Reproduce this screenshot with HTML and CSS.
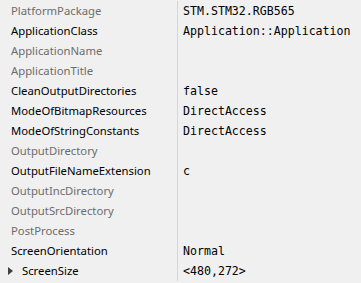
FILE: index.html
```html
<!DOCTYPE html>
<html lang="en">
<head>
    <meta charset="UTF-8">
    <title>Properties</title>
    <link rel="stylesheet" href="styles.css">
</head>
<body>

<div class="grid">
    <div class="row"><div class="name dim">PlatformPackage</div><div class="value">STM.STM32.RGB565</div></div>
    <div class="row"><div class="name">ApplicationClass</div><div class="value">Application::Application</div></div>
    <div class="row"><div class="name dim">ApplicationName</div><div class="value"></div></div>
    <div class="row"><div class="name dim">ApplicationTitle</div><div class="value"></div></div>
    <div class="row"><div class="name">CleanOutputDirectories</div><div class="value">false</div></div>
    <div class="row"><div class="name">ModeOfBitmapResources</div><div class="value">DirectAccess</div></div>
    <div class="row"><div class="name">ModeOfStringConstants</div><div class="value">DirectAccess</div></div>
    <div class="row"><div class="name dim">OutputDirectory</div><div class="value"></div></div>
    <div class="row"><div class="name">OutputFileNameExtension</div><div class="value">c</div></div>
    <div class="row"><div class="name dim">OutputIncDirectory</div><div class="value"></div></div>
    <div class="row"><div class="name dim">OutputSrcDirectory</div><div class="value"></div></div>
    <div class="row"><div class="name dim">PostProcess</div><div class="value"></div></div>
    <div class="row"><div class="name">ScreenOrientation</div><div class="value">Normal</div></div>
    <div class="row"><div class="name expandable"><span class="arrow"></span>ScreenSize</div><div class="value">&lt;480,272&gt;</div></div>
</div>

</body>
</html>
```

FILE: styles.css
```css
body {
    margin: 0;
    padding: 0;
    background-color: #f0f0f0;
    font-family: "Noto Sans", "Open Sans", sans-serif;
    font-size: 11.3px;
    color: #000;
}

.grid {
    display: flex;
    flex-direction: column;
    padding-top: 1px;
}

.row {
    display: flex;
    height: 20px;
    align-items: center;
}

.name {
    width: 166px;
    padding-left: 11px;
    border-right: 1px solid #d6d6d6;
    height: 20px;
    line-height: 20px;
    white-space: nowrap;
}

.dim {
    color: #6d6d6d;
}

.expandable {
    display: flex;
    align-items: center;
    padding-left: 8px;
    width: 169px;
}

.arrow {
    width: 0;
    height: 0;
    border-top: 4px solid transparent;
    border-bottom: 4px solid transparent;
    border-left: 5px solid #404040;
    margin-right: 9px;
}

.value {
    padding-left: 5px;
    font-family: "DejaVu Sans Mono", monospace;
    font-size: 11.6px;
    white-space: nowrap;
}
```
